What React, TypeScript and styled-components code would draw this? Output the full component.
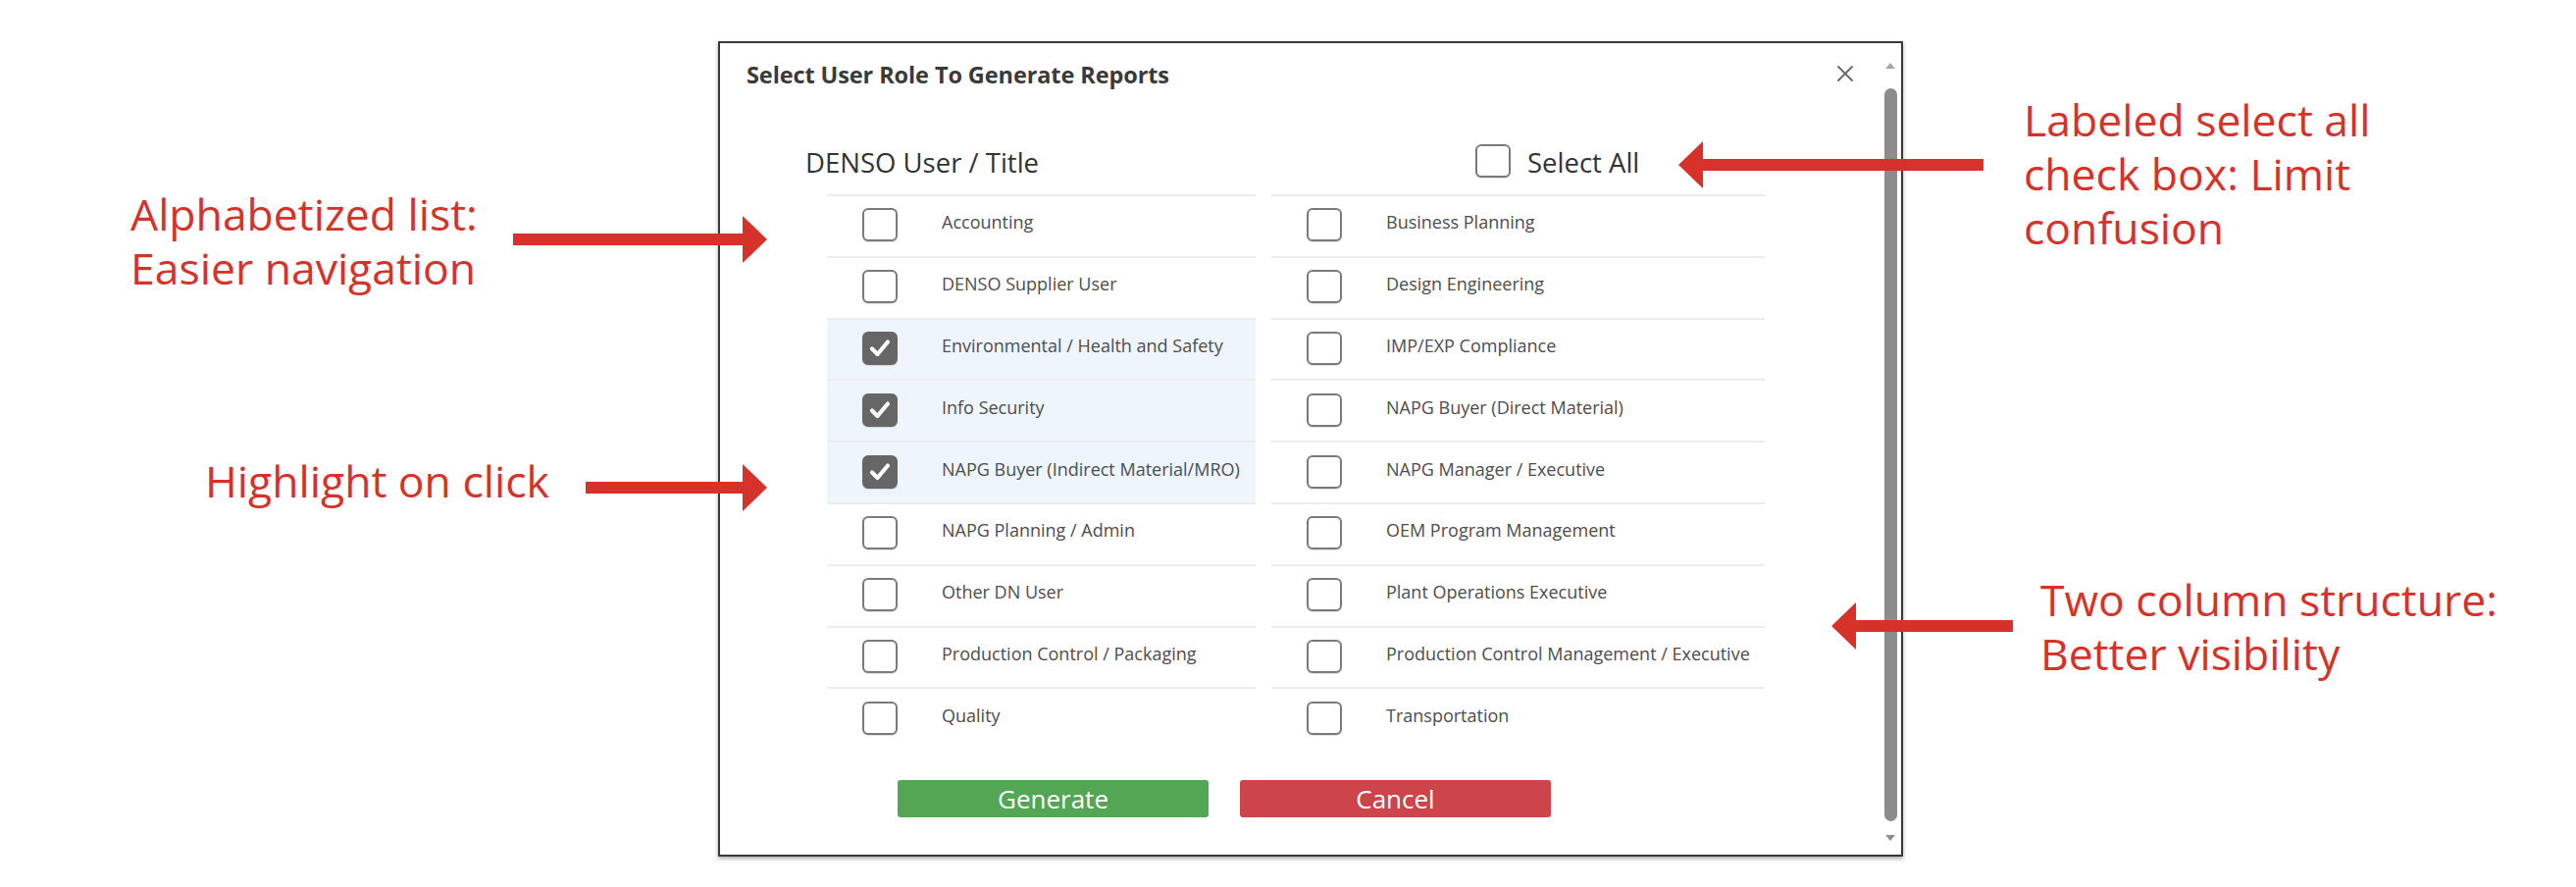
import React from "react";
import styled, { createGlobalStyle } from "styled-components";

const RED = "#d7322a";

const GlobalStyle = createGlobalStyle`
  html, body {
    margin: 0;
    padding: 0;
    background: #fff;
  }
  body {
    font-family: "Open Sans", "Noto Sans", sans-serif;
  }
  * {
    box-sizing: border-box;
  }
`;

type Role = { label: string; checked?: boolean };

const leftRoles: Role[] = [
  { label: "Accounting" },
  { label: "DENSO Supplier User" },
  { label: "Environmental / Health and Safety", checked: true },
  { label: "Info Security", checked: true },
  { label: "NAPG Buyer (Indirect Material/MRO)", checked: true },
  { label: "NAPG Planning / Admin" },
  { label: "Other DN User" },
  { label: "Production Control / Packaging" },
  { label: "Quality" },
];

const rightRoles: Role[] = [
  { label: "Business Planning" },
  { label: "Design Engineering" },
  { label: "IMP/EXP Compliance" },
  { label: "NAPG Buyer (Direct Material)" },
  { label: "NAPG Manager / Executive" },
  { label: "OEM Program Management" },
  { label: "Plant Operations Executive" },
  { label: "Production Control Management / Executive" },
  { label: "Transportation" },
];

const Arrow = ({ length, dir, offset, gap = 0 }: { length: number; dir: "left" | "right"; offset: number; gap?: number }) => {
	const h = 48
	const head = 25
	const half = 6
	const mid = h / 2
	const pts = dir === "right"
		? `0,${mid - half} ${length - head},${mid - half} ${length - head},0 ${length},${mid} ${length - head},${h} ${length - head},${mid + half} 0,${mid + half}`
		: `${length},${mid - half} ${head},${mid - half} ${head},0 0,${mid} ${head},${h} ${head},${mid + half} ${length},${mid + half}`
	return (
		<ArrowBox $offset={offset} $gap={gap}>
			<svg width={length} height={h} viewBox={`0 0 ${length} ${h}`}>
				<polygon points={pts} fill={RED} />
			</svg>
		</ArrowBox>
	)
}

const CheckBox = ({ checked }: { checked?: boolean }) => (
	<Box $checked={checked}>
		{checked &&
			<svg width="22" height="20" viewBox="0 0 22 20">
				<polyline points="3,10.5 8.5,16 19,3.5" fill="none" stroke="#fff" strokeWidth="4.2" strokeLinecap="round" strokeLinejoin="round" />
			</svg>
		}
	</Box>
)

export default function App() {
	const rows = leftRoles.map((r, i) => [r, rightRoles[i]])
	return (
		<>
			<GlobalStyle />
			<Page>
				<NotesColumn>
					<Callout $top={189.5} $left={133}>
						<NoteText $width={390}>Alphabetized list:<br />Easier navigation</NoteText>
						<Arrow length={259} dir="right" offset={30.5} />
					</Callout>
					<Callout $top={162} $left={209}>
						<NoteText $width={388}>Highlight on click</NoteText>
						<Arrow length={185} dir="right" offset={11.5} />
					</Callout>
				</NotesColumn>

				<Dialog>
					<DialogMain>
						<TitleBar>
							<Title>Select User Role To Generate Reports</Title>
							<CloseButton aria-label="Close">
								<svg width="20" height="20" viewBox="0 0 20 20">
									<path d="M3 3 L17 17 M17 3 L3 17" stroke="#6b6b6b" strokeWidth="2" strokeLinecap="round" />
								</svg>
							</CloseButton>
						</TitleBar>

						<Table>
							<HeaderRow>
								<ColumnHeading>DENSO User / Title</ColumnHeading>
								<SelectAll>
									<CheckBox />
									<span>Select All</span>
								</SelectAll>
							</HeaderRow>
							<RoleGrid>
								{rows.map(([l, r]) => (
									<React.Fragment key={l.label}>
										<RoleCell $selected={l.checked}>
											<CheckBox checked={l.checked} />
											<RoleLabel>{l.label}</RoleLabel>
										</RoleCell>
										<RoleCell $selected={r.checked}>
											<CheckBox checked={r.checked} />
											<RoleLabel>{r.label}</RoleLabel>
										</RoleCell>
									</React.Fragment>
								))}
							</RoleGrid>
						</Table>

						<Actions>
							<ActionButton $color="#53a653">Generate</ActionButton>
							<ActionButton $color="#cd444b">Cancel</ActionButton>
						</Actions>
					</DialogMain>

					<ScrollBar>
						<ScrollArrow $zone={46} $up />
						<ScrollThumb />
						<ScrollArrow $zone={34} />
					</ScrollBar>
				</Dialog>

				<NotesColumn>
					<Callout $top={93.7} $left={-229}>
						<Arrow length={311} dir="left" offset={50} gap={41} />
						<NoteText>Labeled select all<br />check box: Limit<br />confusion</NoteText>
					</Callout>
					<Callout $top={324.8} $left={-73}>
						<Arrow length={185} dir="left" offset={30.5} gap={28} />
						<NoteText>Two column structure:<br />Better visibility</NoteText>
					</Callout>
				</NotesColumn>
			</Page>
		</>
	)
}

const Page = styled.div`
	width: 2626px;
	height: 904px;
	display: grid;
	grid-template-columns: 732px 1208px 1fr;
	align-items: start;
	background: #fff;
	overflow: hidden;
`;

const NotesColumn = styled.div`
	position: relative;
	z-index: 2;
	display: flex;
	flex-direction: column;
	min-width: 0;
`;

const Callout = styled.div<{ $top: number; $left: number }>`
	display: flex;
	align-items: flex-start;
	margin-top: ${p => p.$top}px;
	margin-left: ${p => p.$left}px;
`;

const NoteText = styled.div<{ $width?: number }>`
	flex-shrink: 0;
	width: ${p => (p.$width ? `${p.$width}px` : "auto")};
	font-family: "Open Sans", "Noto Sans", sans-serif;
	font-size: 44.5px;
	line-height: 55px;
	color: ${RED};
	white-space: nowrap;
`;

const ArrowBox = styled.div<{ $offset: number; $gap: number }>`
	flex-shrink: 0;
	margin-top: ${p => p.$offset}px;
	margin-right: ${p => p.$gap}px;
	line-height: 0;

	svg {
		display: block;
	}
`;

const Dialog = styled.section`
	position: relative;
	z-index: 1;
	display: flex;
	width: 1208px;
	height: 831px;
	margin-top: 42px;
	background: #fff;
	border: 2px solid #3a3a3a;
	box-shadow: 0 2px 4px rgba(0, 0, 0, 0.35);
`;

const DialogMain = styled.div`
	flex: 1;
	min-width: 0;
	display: flex;
	flex-direction: column;
`;

const TitleBar = styled.header`
	display: flex;
	align-items: center;
	justify-content: space-between;
	padding: 19px 27px 0 27px;
`;

const Title = styled.h1`
	margin: 0;
	font-family: "Open Sans", "Noto Sans", sans-serif;
	font-size: 23.5px;
	font-weight: 700;
	line-height: 26px;
	color: #3a3a3a;
	letter-spacing: -0.1px;
`;

const CloseButton = styled.button`
	width: 20px;
	height: 20px;
	padding: 0;
	margin-top: -2px;
	border: none;
	background: none;
	line-height: 0;
	cursor: pointer;
`;

const Table = styled.div`
	margin-top: 43px;
	padding-left: 109px;
`;

const HeaderRow = styled.div`
	display: grid;
	grid-template-columns: 437px 503px;
	column-gap: 16px;
	height: 66px;
	align-items: center;
`;

const ColumnHeading = styled.div`
	margin-left: -22px;
	font-size: 27.5px;
	color: #333;
	white-space: nowrap;
`;

const SelectAll = styled.label`
	display: flex;
	align-items: center;
	gap: 17px;
	padding-left: 208px;
	font-size: 27.5px;
	color: #333;
	white-space: nowrap;
`;

const RoleGrid = styled.div`
	display: grid;
	grid-template-columns: 437px 503px;
	grid-auto-rows: 62.8px;
	column-gap: 16px;
`;

const RoleCell = styled.label<{ $selected?: boolean }>`
	display: flex;
	align-items: center;
	gap: 45px;
	padding-left: 36px;
	border-top: 2px solid #ececec;
	background: ${p => (p.$selected ? "#eef5fd" : "transparent")};
	cursor: pointer;
`;

const Box = styled.span<{ $checked?: boolean }>`
	flex-shrink: 0;
	display: flex;
	align-items: center;
	justify-content: center;
	width: 36px;
	height: 34px;
	margin-bottom: 2px;
	border-radius: 6px;
	border: 2.5px solid ${p => (p.$checked ? "#666" : "#7a7a7a")};
	background: ${p => (p.$checked ? "#666" : "#fff")};
	box-shadow: 0 1px 1px rgba(0, 0, 0, 0.12);
`;

const RoleLabel = styled.span`
	padding-bottom: 8px;
	font-size: 18px;
	color: #4d4d4d;
	white-space: nowrap;
`;

const Actions = styled.div`
	display: flex;
	gap: 32px;
	margin-top: 32px;
	padding-left: 181px;
`;

const ActionButton = styled.button<{ $color: string }>`
	width: 317px;
	height: 38px;
	padding: 0;
	border: none;
	border-radius: 3px;
	background: ${p => p.$color};
	color: #fff;
	font-family: "Open Sans", "Noto Sans", sans-serif;
	font-size: 26px;
	line-height: 38px;
	cursor: pointer;
`;

const ScrollBar = styled.div`
	display: flex;
	flex-direction: column;
	width: 20px;
	flex-shrink: 0;
`;

const ScrollArrow = styled.div<{ $zone: number; $up?: boolean }>`
	height: ${p => p.$zone}px;
	display: flex;
	align-items: center;
	justify-content: center;

	&::before {
		content: "";
		width: 0;
		height: 0;
		margin-left: -2px;
		border-left: 5px solid transparent;
		border-right: 5px solid transparent;
		${p => (p.$up ? "border-bottom: 6px solid #a8a8a8;" : "border-top: 6px solid #8e8e8e;")}
	}
`;

const ScrollThumb = styled.div`
	flex: 1;
	width: 13px;
	margin-left: 3px;
	border-radius: 7px;
	background: #8c8c8c;
`;
